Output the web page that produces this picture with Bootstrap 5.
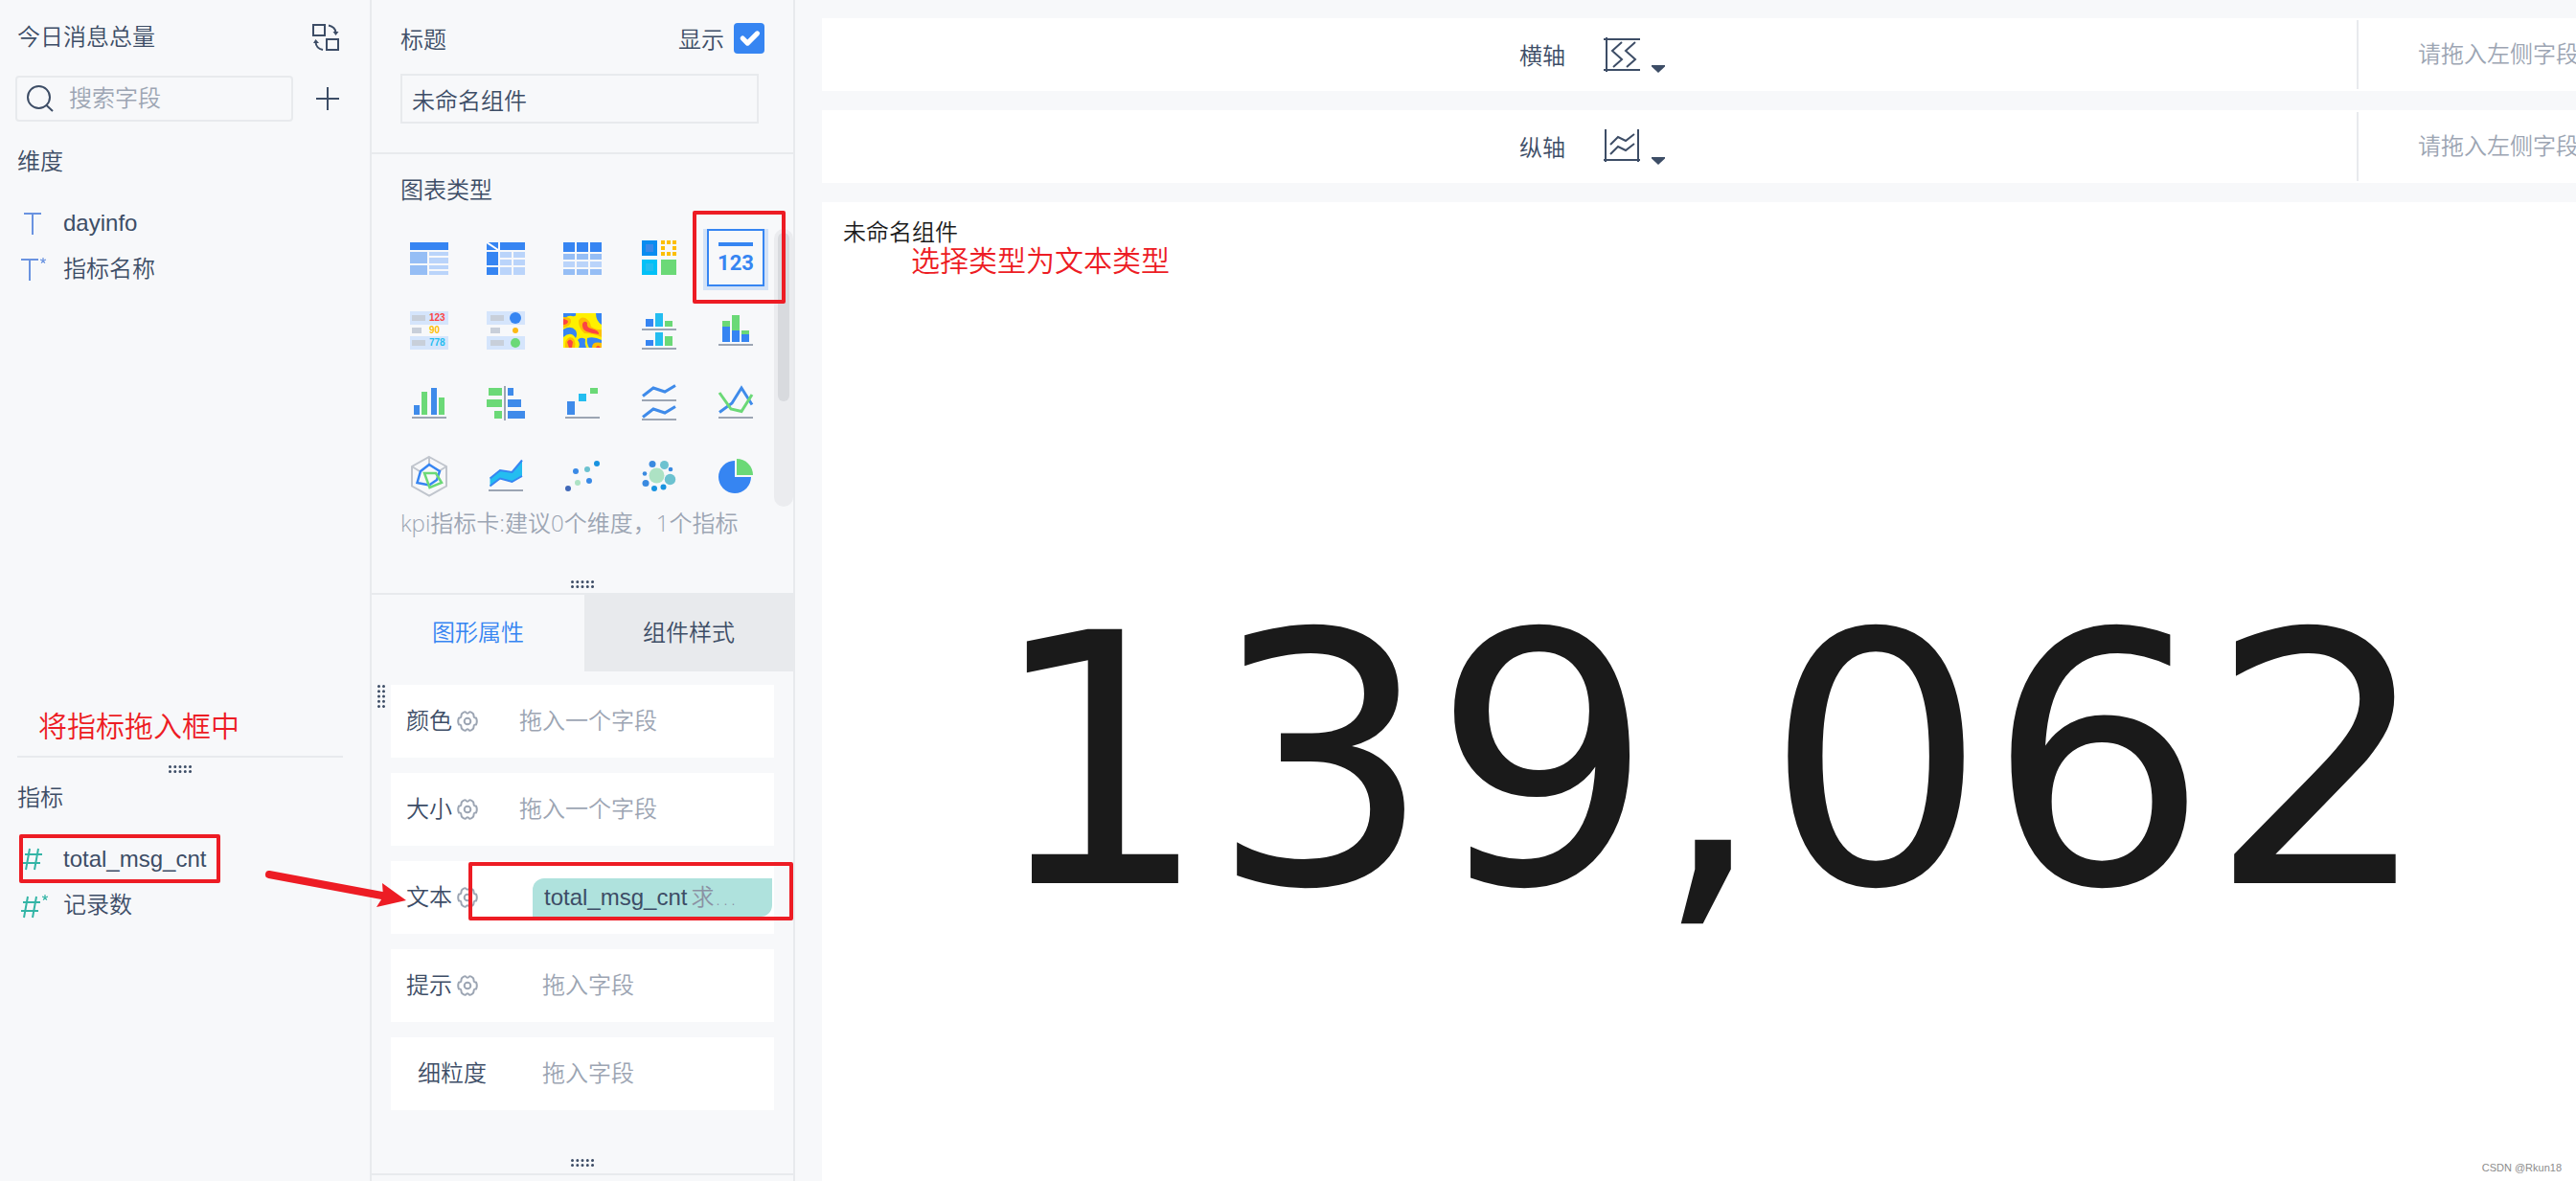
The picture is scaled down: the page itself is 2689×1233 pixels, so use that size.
<!DOCTYPE html>
<html lang="zh-CN">
<head>
<meta charset="utf-8">
<meta name="viewport" content="width=device-width, initial-scale=1">
<title>今日消息总量</title>
<link rel="stylesheet" href="https://cdn.jsdelivr.net/npm/bootstrap@5.3.0/dist/css/bootstrap.min.css">
<style>
  :root { --ink:#3d4d66; --muted:#9ca5b3; --line:#e8eaed; --panel:#f7f8fa; --accent:#3685f2; --red:#ed1c24; }
  body { background:var(--panel); color:var(--ink); font-family:"Liberation Sans","Noto Sans CJK SC",sans-serif; font-weight:350; font-size:24px; line-height:36px; }
  svg { display:block; flex:none; overflow:visible; }
  .fields { width:388px; border-right:2px solid var(--line); }
  .fields-top { padding:21px 32px 0 16px; }
  .fields-bottom { flex:0 0 36%; padding:0 28px 0 18px; }
  .rule-top { border-top:2px solid var(--line); padding-top:8px; }
  .plain { border:0; background:none; padding:0; color:inherit; }
  .inset-2 { padding-left:2px; }
  .search-box { border:2px solid var(--line); border-radius:4px; height:48px; padding:0 10px; min-width:0; }
  .field-input { border:0; background:none; outline:0; color:var(--ink); padding:0; width:100%; min-width:0; font-weight:350; line-height:36px; }
  .field-input::placeholder { color:var(--muted); opacity:1; }
  .field-item { height:48px; color:var(--ink); text-decoration:none; }
  .mt-22 { margin-top:22px; }
  .gap-18 { gap:18px; }
  .cjk { font-family:"Noto Sans CJK SC",sans-serif; }
  .config { width:442px; border-right:2px solid var(--line); }
  .title-part { padding:24px 30px 30px; border-bottom:2px solid var(--line); }
  .title-row { height:32px; }
  .show-pair { gap:10px; }
  .title-input { border:2px solid var(--line); background:none; height:52px; padding:0 10px; color:var(--ink); margin:21px 6px 0 0; font-weight:350; }
  .show-box.form-check-input { width:32px; height:32px; margin:0; border:0; border-radius:4px; background-color:#fff; }
  .show-box.form-check-input:checked { background-color:var(--accent); background-size:34px; }
  .type-part { padding-top:20px; border-bottom:2px solid var(--line); }
  .part-name { padding-left:30px; }
  .type-view { height:290px; padding-left:40px; margin-top:22px; }
  .type-grid { display:grid; grid-template-columns:repeat(5,40px); grid-auto-rows:40px; gap:36px 40px; padding-top:10px; }
  .type-now { margin:-10px -14px; width:68px; height:64px; }
  .track { width:20px; border-radius:10px; background:#ebecef; padding:4px; }
  .thumb { height:176px; border-radius:6px; background:#d8dade; }
  .hint { color:var(--muted); padding-left:30px; height:36px; font-family:"Open Sans","Noto Sans CJK SC",sans-serif; line-height:34px; }
  .type-dots { margin:41px 0 5px; }
  .tabs { height:80px; background:var(--line); }
  .tabs button { background:var(--line); color:var(--ink); font-weight:350; }
  .tabs .on { background:var(--panel); color:var(--accent); flex:0 0 222px; }
  .slots { padding:14px 20px 0; gap:16px; }
  .slot { height:76px; background:#fff; padding-left:16px; }
  .slot-name { width:118px; gap:5px; }
  .slot-name.deep { width:142px; }
  .slot-name.inset { padding-left:12px; }
  .muted { color:var(--muted); }
  .pill { width:250px; height:40px; margin-left:14px; padding-left:12px; background:#afe2dd; border-radius:12px 0; }
  .pill-kind { color:#8b91a3; font-family:"DejaVu Sans","Noto Sans CJK SC",sans-serif; }
  .slots-end { padding-bottom:7px; border-bottom:2px solid var(--line); margin-top:51px; }
  .side-dots { left:6px; top:14px; }
  .board { padding:19px 0 0 28px; gap:20px; min-width:0; }
  .axis { height:76px; background:#fff; padding:2px 0; }
  .axis-label { padding-left:6px; gap:40px; }
  .axis-drop { width:229px; border-left:2px solid var(--line); padding-left:62px; white-space:nowrap; line-height:34px; }
  .axis-name { gap:10px; }
  .chart { background:#fff; color:#1a1a1a; padding:12px 0 0 22px; }
  .chart-value { font:400 364px/1 Verdana,"DejaVu Sans",sans-serif; padding-top:100px; }
  .mark-box { border:4px solid var(--red); border-radius:2px; pointer-events:none; position:absolute; }
  .mark-type { left:335px; top:-19px; width:97px; height:97px; }
  .mark-field { left:2px; top:-2px; width:210px; height:51px; }
  .mark-slot { left:81px; top:1px; width:339px; height:61px; }
  .note { position:absolute; color:var(--red); font-family:KaiTi,"Noto Sans CJK SC",sans-serif; font-size:30px; line-height:32px; white-space:nowrap; }
  .note-field { left:40px; bottom:17px; }
  .note-type { left:93px; top:43px; }
  .arrow { position:absolute; left:276px; top:905px; }
  .watermark { position:absolute; right:15px; bottom:4px; font-size:11px; line-height:20px; color:#8c8c8c; }
</style>
</head>
<body class="m-0">
<svg width="0" height="0" class="position-absolute" aria-hidden="true">
  <symbol id="dots" viewBox="0 0 24 8"><path d="M1.5 1.5h.01M6.8 1.5h.01M12 1.5h.01M17.3 1.5h.01M22.5 1.5h.01M1.5 6.5h.01M6.8 6.5h.01M12 6.5h.01M17.3 6.5h.01M22.5 6.5h.01" stroke="#3d4d66" stroke-width="3" stroke-linecap="round"/></symbol>
  <symbol id="gear" viewBox="0 0 22 22"><g fill="none" stroke="#9ca5b3" stroke-width="2" stroke-linejoin="round"><path d="M20 7.500Q21.600 11 20 14.500Q17.500 14 17.500 17Q17.500 18 16.500 19.300Q14 21.500 12.800 20.500Q11 18 9.200 20.500Q8 21.500 5.500 19.300Q4.500 18 4.500 17Q4.500 14 2 14.500Q.4 11 2 7.500Q4.500 8 4.500 5Q4.500 4 5.500 2.700Q8 .5 9.200 1.500Q11 4 12.800 1.500Q14 .5 16.500 2.700Q17.500 4 17.500 5Q17.500 8 20 7.500Z"/><circle cx="11" cy="11" r="3.300"/></g></symbol>
  <symbol id="caret" viewBox="0 0 14 8"><path d="M0 0H14V1.500L7 8L0 1.500Z" fill="#3d4d66"/></symbol>
  <symbol id="star" viewBox="0 0 6 6"><path d="M3 0V3M0 2.200L3 3L6 2.200M1.200 5.700L3 3L4.800 5.700" fill="none" stroke="currentColor" stroke-width="1.200"/></symbol>
</svg>
<div class="d-flex vh-100 overflow-hidden position-relative">

  <aside class="fields d-flex flex-column flex-shrink-0">
    <div class="fields-top flex-grow-1 position-relative">
      <div class="d-flex justify-content-between align-items-center">
        <span class="inset-2">今日消息总量</span>
        <button class="plain" type="button" aria-label="切换"><svg width="28" height="28" fill="none" stroke="#3d4d66" stroke-width="2"><rect x="1" y="1" width="12" height="11"/><rect x="15" y="16" width="12" height="11"/><path d="M17 1.500Q24 3 24.500 9M11 27Q4 25.500 3.500 19"/><path d="M21.500 8H27.500L24.500 12ZM1 20H7L3.500 16Z" fill="#3d4d66" stroke="none"/></svg></button>
      </div>
      <div class="d-flex align-items-center justify-content-between mt-22">
        <label class="search-box d-flex align-items-center gap-3 flex-grow-1 me-4">
          <svg width="28" height="28" fill="none" stroke="#3d4d66" stroke-width="2"><circle cx="12.500" cy="12.500" r="11.500"/><path d="M20 20.500L27 27"/></svg>
          <input class="field-input" type="text" placeholder="搜索字段" aria-label="搜索字段">
        </label>
        <button class="plain" type="button" aria-label="添加"><svg width="24" height="24" stroke="#3d4d66" stroke-width="2"><path d="M12 0V24M0 12H24"/></svg></button>
      </div>
      <div class="mt-4 inset-2">维度</div>
      <nav class="mt-22">
        <a href="#" class="field-item d-flex align-items-center gap-18"><svg class="ms-1" width="28" height="24" stroke="#6a93e0" stroke-width="2"><path d="M5 2H23M14 2V24"/></svg>dayinfo</a>
        <a href="#" class="field-item d-flex align-items-center gap-18"><svg class="ms-1" width="28" height="24" fill="none" stroke="#6a93e0" stroke-width="2" color="#6a93e0"><path d="M2 2H20M11 2V24"/><use href="#star" x="22" y="0" width="6" height="6"/></svg>指标名称</a>
      </nav>
      <div class="note note-field">将指标拖入框中</div>
    </div>
    <div class="fields-bottom">
      <div class="rule-top d-flex justify-content-center"><svg width="24" height="8"><use href="#dots"/></svg></div>
      <div class="mt-2">指标</div>
      <nav class="mt-22">
        <a href="#" class="field-item d-flex align-items-center gap-18 position-relative"><svg class="ms-1" width="26" height="24" fill="none" stroke="#34b5a6" stroke-width="2"><path d="M9 1L5 23M18 1L14 23M4 7H22M2 16H20"/></svg>total_msg_cnt<span class="mark-box mark-field"></span></a>
        <a href="#" class="field-item d-flex align-items-center gap-18"><svg class="ms-1" width="26" height="24" fill="none" stroke="#34b5a6" stroke-width="2" color="#34b5a6"><path d="M7 3L3 25M16 3L12 25M2 9H20M0 18H18"/><use href="#star" x="22" y="1" width="6" height="6"/></svg>记录数</a>
      </nav>
    </div>
  </aside>

  <aside class="config d-flex flex-column flex-shrink-0">
    <section class="title-part d-flex flex-column">
      <div class="title-row d-flex align-items-center justify-content-between cjk">
        <label for="title-text">标题</label>
        <div class="show-pair d-flex align-items-center"><label for="show-title">显示</label><input class="form-check-input show-box" type="checkbox" id="show-title" checked></div>
      </div>
      <input class="title-input" id="title-text" type="text" value="未命名组件">
    </section>

    <section class="type-part">
      <div class="part-name">图表类型</div>
      <div class="type-view d-flex justify-content-between position-relative">
        <div class="type-grid">
          <button class="plain" type="button" aria-label="分组表"><svg width="40" height="40"><path fill="#3685f2" d="M0 4H40V12H0Z"/><path fill="#96bef5" d="M0 14H18V26H0ZM0 28H18V38H0Z"/><path fill="#bad4fa" d="M20 14H40V18H20ZM20 20H40V26H20ZM20 28H40V32H20ZM20 34H40V38H20Z"/></svg></button>
          <button class="plain" type="button" aria-label="交叉表"><svg width="40" height="40"><path fill="#3685f2" d="M0 4H12V12H0ZM14 4H40V12H14ZM0 14H12V28H0ZM0 30H12V38H0Z"/><path d="M0 4L12 12" stroke="#fff" stroke-width="2"/><path fill="#bad4fa" d="M14 14H26V20H14ZM28 14H40V20H28ZM14 22H26V28H14ZM28 22H40V28H28ZM14 30H26V38H14ZM28 30H40V38H28Z"/></svg></button>
          <button class="plain" type="button" aria-label="明细表"><svg width="40" height="40"><path fill="#3685f2" d="M0 4H12V14H0ZM14 4H26V14H14ZM28 4H40V14H28Z"/><path fill="#96bef5" d="M0 16H12V22H0ZM14 16H26V22H14ZM28 16H40V22H28ZM0 32H12V38H0ZM14 32H26V38H14ZM28 32H40V38H28Z"/><path fill="#bad4fa" d="M0 24H12V30H0ZM14 24H26V30H14ZM28 24H40V30H28Z"/></svg></button>
          <button class="plain" type="button" aria-label="颜色表格"><svg width="40" height="40"><path fill="#0a8cf0" d="M2 2H18V18H2Z"/><path fill="#3c88e8" d="M6 6H14V14H6Z"/><path fill="#03c1f7" d="M2 22H18V38H2Z"/><path fill="#24bdf0" d="M6 26H14V34H6Z"/><path fill="#6bd977" d="M22 22H38V38H22Z"/><path fill="#fdbf02" d="M22 2H26V6H22ZM28 2H32V6H28ZM34 2H38V6H34ZM22 8H26V12H22ZM34 8H38V12H34ZM22 14H26V18H22ZM28 14H32V18H28ZM34 14H38V18H34Z"/></svg></button>
          <button class="plain type-now" type="button" aria-label="KPI指标卡" aria-pressed="true"><svg width="68" height="64"><path fill="#d3e2f7" d="M0 0H68V64H0Z"/><path fill="#f7f8fa" stroke="#3685f2" stroke-width="2" d="M5 1H63V59H5Z"/><path fill="#3685f2" d="M16 14H52V18H16Z"/><text x="34" y="43" text-anchor="middle" font-family="Roboto" font-weight="700" font-size="22" fill="#3685f2">123</text></svg></button>

          <button class="plain" type="button" aria-label="颜色文字表"><svg width="40" height="40"><path fill="#d5e5fc" d="M0 0H40V14H0ZM0 26H40V40H0Z"/><path fill="#c8cfda" d="M2 4H16V10H2ZM2 17H12V23H2ZM2 30H16V36H2Z"/><g font-family="Liberation Sans" font-weight="700" font-size="10"><text x="20" y="10" fill="#fc4443">123</text><text x="20" y="23" fill="#fdbf02">90</text><text x="20" y="36" fill="#24bdf0">778</text></g></svg></button>
          <button class="plain" type="button" aria-label="圆点表"><svg width="40" height="40"><path fill="#d5e5fc" d="M0 0H40V14H0ZM0 26H40V40H0Z"/><path fill="#c8cfda" d="M4 4H18V10H4ZM4 17H14V23H4ZM4 30H18V36H4Z"/><circle cx="30" cy="7" r="6" fill="#3685f2"/><circle cx="30" cy="20" r="3" fill="#fdb913"/><circle cx="30" cy="33" r="5" fill="#6bd977"/></svg></button>
          <button class="plain" type="button" aria-label="热力图"><svg width="40" height="36" viewBox="0 2 40 36" style="overflow:hidden"><path fill="#fff000" d="M0 2H40V38H0Z"/><path fill="#3685f2" d="M0 2H13Q14 6 9 5Q4 4 2 8L0 7ZM34 2H40V14Q34 10 34 2ZM0 19Q8 14 13 20Q15 24 13 28Q8 20 0 27ZM15 30Q18 26 23 29Q22 34 24 38H16Q18 34 15 30ZM25 28Q32 26 40 30V38H27Q24 33 25 28Z"/><path fill="#fdbf02" d="M0 6Q9 6 8 11Q7 16 0 17ZM16 10Q18 5 23 7Q28 10 29 16Q36 20 40 19V27Q32 23 22 23Q16 18 16 10ZM2 38Q1 29 7 27Q14 28 12 38ZM30 38Q30 31 40 33V38Z"/><path fill="#fc4443" d="M0 8Q5 9 5 11Q4 14 0 14ZM20 13Q22 9 25 12Q24 17 29 18Q38 20 37 24Q29 23 24 21Q19 18 20 13ZM4 32Q7 27 10 32L9 38H6ZM34 38Q36 34 39 38Z"/></svg></button>
          <button class="plain" type="button" aria-label="多系列柱形图"><svg width="40" height="40"><path fill="#3685f2" d="M6 8H14V16H6ZM6 30H14V36H6Z"/><path fill="#24bdf0" d="M16 2H24V16H16ZM16 22H24V36H16Z"/><path fill="#6bd977" d="M26 10H34V16H26ZM26 26H34V36H26Z"/><path stroke="#9ca5b3" stroke-width="2" d="M2 19H38M2 39H38"/></svg></button>
          <button class="plain" type="button" aria-label="堆积柱形图"><svg width="40" height="40"><path fill="#6bd977" d="M6 10H14V16H6ZM16 4H24V20H16ZM26 20H34V24H26Z"/><path fill="#3685f2" d="M6 16H14V32H6ZM16 20H24V32H16ZM26 24H34V32H26Z"/><path stroke="#9ca5b3" stroke-width="2" d="M2 35H38"/></svg></button>

          <button class="plain" type="button" aria-label="柱形图"><svg width="40" height="40"><path fill="#3f8bea" d="M4 22H10V32H4ZM22 4H28V32H22Z"/><path fill="#6bd977" d="M12 8H18V32H12ZM30 14H36V32H30Z"/><path stroke="#9ca5b3" stroke-width="2" d="M2 35H38"/></svg></button>
          <button class="plain" type="button" aria-label="对比柱状图"><svg width="40" height="40"><path fill="#6bd977" d="M2 4H16V12H2ZM0 16H16V24H0ZM8 28H16V36H8Z"/><path fill="#3f8bea" d="M22 4H28V12H22ZM22 16H36V24H22ZM22 28H40V36H22Z"/><path stroke="#9ca5b3" stroke-width="2" d="M19 2V38"/></svg></button>
          <button class="plain" type="button" aria-label="瀑布图"><svg width="40" height="40"><path fill="#3f8bea" d="M4 18H12V32H4Z"/><path fill="#24bdf0" d="M16 10H24V18H16Z"/><path fill="#6bd977" d="M28 4H36V10H28Z"/><path stroke="#9ca5b3" stroke-width="2" d="M2 35H38"/></svg></button>
          <button class="plain" type="button" aria-label="多系列折线图"><svg width="40" height="40" fill="none" stroke="#3f8bea" stroke-width="3"><path d="M3 12.500L14 4L26 8L37 1.500M3 34.500L14 26L26 30L37 23.500"/><path stroke="#9ca5b3" stroke-width="2" d="M2 17H38M2 37H38"/></svg></button>
          <button class="plain" type="button" aria-label="折线图"><svg width="40" height="40" fill="none" stroke-width="3"><path stroke="#3f8bea" d="M3 29.500L16 20L26 4L37 21.500"/><path stroke="#6bd977" d="M3 9L15 26L26 28.500L37 11"/><path stroke="#9ca5b3" stroke-width="2" d="M2 35H38"/></svg></button>

          <button class="plain" type="button" aria-label="雷达图"><svg width="40" height="40" fill="none"><path stroke="#c0c5cd" stroke-width="2" d="M20 0L38 10V30.500L20 40.500L2 30.500V10ZM20 0V8M2 10L10 15M30 15L38 10"/><path stroke="#3685f2" stroke-width="2.500" d="M20 8L31 15L28 24L20 29.500L7.500 27L11 15Z"/><path stroke="#6bd977" stroke-width="2.500" d="M15 17H27L33 27L20.500 32Z"/></svg></button>
          <button class="plain" type="button" aria-label="面积图"><svg width="40" height="40"><path fill="#24bdf0" d="M3.500 22.500L14 14L26.500 16L37 4V20L26.500 26.500L14 22.500L3.500 30.500Z"/><path fill="none" stroke="#3685f2" stroke-width="2" d="M3.500 22.500L14 14L26.500 16L37 3.500M37 20L26.500 26L14 22.500L3.500 30.500"/><path stroke="#9ca5b3" stroke-width="2" d="M2 35H38"/></svg></button>
          <button class="plain" type="button" aria-label="散点图"><svg width="40" height="40"><circle cx="5" cy="33" r="3" fill="#4169b8"/><circle cx="13" cy="15" r="3" fill="#3a8ae6"/><circle cx="15" cy="27" r="3" fill="#ade2c4"/><circle cx="25" cy="13" r="3" fill="#6cc2d0"/><circle cx="27" cy="25" r="3" fill="#3a8ae6"/><circle cx="35" cy="7" r="3" fill="#1893e0"/></svg></button>
          <button class="plain" type="button" aria-label="聚合气泡图"><svg width="40" height="40" fill="#3a8ae0"><circle cx="17.500" cy="19.500" r="8" fill="#ade2c4"/><circle cx="13" cy="7.500" r="3.500"/><circle cx="25.500" cy="8.500" r="4.500" fill="#6cc2d0"/><circle cx="32" cy="13" r="2.300"/><circle cx="31.500" cy="23.500" r="5.700" fill="#6cc2d0"/><circle cx="24.500" cy="31.500" r="3" fill="#1893e0"/><circle cx="15" cy="33" r="3" fill="#1893e0"/><circle cx="6" cy="27.500" r="3.500"/><circle cx="5" cy="17.500" r="2.300"/></svg></button>
          <button class="plain" type="button" aria-label="饼图"><svg width="40" height="40"><path fill="#3685f2" d="M19 4V21H36A17 17 0 1 1 19 4Z"/><path fill="#6bd977" d="M21 2A17 17 0 0 1 38 19H21Z"/></svg></button>
        </div>
        <div class="track"><div class="thumb"></div></div>
        <span class="mark-box mark-type"></span>
      </div>
      <div class="hint">kpi指标卡:建议0个维度，1个指标</div>
      <div class="type-dots d-flex justify-content-center"><svg width="24" height="8"><use href="#dots"/></svg></div>
    </section>

    <div class="tabs d-flex">
      <button class="plain on" type="button">图形属性</button>
      <button class="plain flex-fill" type="button">组件样式</button>
    </div>

    <section class="slots d-flex flex-column position-relative">
      <svg class="side-dots position-absolute" width="8" height="24" viewBox="0 0 8 24"><use href="#dots" width="24" height="8" transform="translate(8 0) rotate(90)"/></svg>
      <div class="slot d-flex align-items-center"><div class="slot-name d-flex align-items-center">颜色<svg width="22" height="22"><use href="#gear"/></svg></div><span class="muted">拖入一个字段</span></div>
      <div class="slot d-flex align-items-center"><div class="slot-name d-flex align-items-center">大小<svg width="22" height="22"><use href="#gear"/></svg></div><span class="muted">拖入一个字段</span></div>
      <div class="slot d-flex align-items-center position-relative"><div class="slot-name d-flex align-items-center">文本<svg width="22" height="22"><use href="#gear"/></svg></div>
        <div class="pill d-flex align-items-center gap-1"><span>total_msg_cnt</span><span class="pill-kind">求…</span></div>
        <span class="mark-box mark-slot"></span></div>
      <div class="slot d-flex align-items-center"><div class="slot-name deep d-flex align-items-center">提示<svg width="22" height="22"><use href="#gear"/></svg></div><span class="muted">拖入字段</span></div>
      <div class="slot d-flex align-items-center"><div class="slot-name deep inset d-flex align-items-center">细粒度</div><span class="muted">拖入字段</span></div>
    </section>
    <div class="slots-end d-flex justify-content-center"><svg width="24" height="8"><use href="#dots"/></svg></div>
  </aside>

  <main class="board d-flex flex-column flex-grow-1">
    <div class="axis d-flex">
      <div class="axis-label flex-grow-1 d-flex align-items-center justify-content-center">
        <span class="cjk">横轴</span>
        <button class="plain axis-name d-flex align-items-end" type="button" aria-label="横轴类型"><svg width="40" height="38" fill="none" stroke="#3d4d66" stroke-width="2"><path d="M0 3H38M0 35H38M3 1V37M19 6L9 15L19 24L10 32M33 6L23 15L33 24L24 32"/></svg><svg width="14" height="8"><use href="#caret"/></svg></button>
      </div>
      <div class="axis-drop d-flex align-items-center overflow-hidden muted">请拖入左侧字段</div>
    </div>
    <div class="axis d-flex">
      <div class="axis-label flex-grow-1 d-flex align-items-center justify-content-center">
        <span class="cjk">纵轴</span>
        <button class="plain axis-name d-flex align-items-end" type="button" aria-label="纵轴类型"><svg width="40" height="38" fill="none" stroke="#3d4d66" stroke-width="2"><path d="M2 1V35M36 1V35M0 33H38M7 17L15 9L23 13L32 6M7 27L15 19L23 23L32 16"/></svg><svg width="14" height="8"><use href="#caret"/></svg></button>
      </div>
      <div class="axis-drop d-flex align-items-center overflow-hidden muted">请拖入左侧字段</div>
    </div>
    <section class="chart flex-grow-1 d-flex flex-column position-relative">
      <div class="cjk">未命名组件</div>
      <div class="note note-type">选择类型为文本类型</div>
      <div class="chart-value flex-grow-1 d-flex align-items-center justify-content-center">139,062</div>
      <div class="watermark">CSDN @Rkun18</div>
    </section>
  </main>

  <svg class="arrow" width="150" height="44"><path d="M5 8L128 31" stroke="#ed1c24" stroke-width="8" stroke-linecap="round"/><path d="M148 35L123 17L124 31L117 42Z" fill="#ed1c24"/></svg>
</div>
<script src="https://cdn.jsdelivr.net/npm/bootstrap@5.3.0/dist/js/bootstrap.bundle.min.js"></script>
</body>
</html>
